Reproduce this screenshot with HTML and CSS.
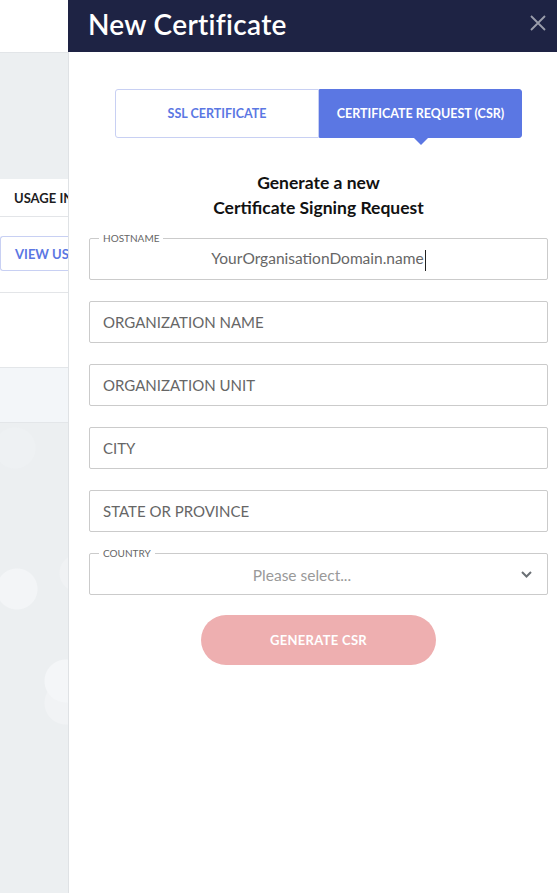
FILE: index.html
```html
<!DOCTYPE html>
<html lang="en">
<head>
    <meta charset="UTF-8">
    <meta name="viewport" content="width=device-width, initial-scale=1.0">
    <title>New Certificate</title>
    <link rel="stylesheet" href="styles.css">
</head>
<body>
    <div class="backdrop">
        <div class="topbar"></div>
        <div class="strip"></div>
        <div class="table-head">USAGE IN</div>
        <div class="table-row">
            <span class="ghost-btn">VIEW USA</span>
        </div>
        <div class="table-blank"></div>
        <div class="table-foot"></div>
        <div class="canvas"></div>
    </div>

    <aside class="panel">
        <header class="panel-header">
            <h1>New Certificate</h1>
            <button class="close" type="button" aria-label="Close">
                <svg width="16" height="16" viewBox="0 0 16 16">
                    <path d="M1 1 L15 15 M15 1 L1 15" stroke="#9a9dab" stroke-width="1.8" fill="none"/>
                </svg>
            </button>
        </header>

        <main class="panel-body">
            <div class="tabs">
                <button type="button" class="tab">SSL CERTIFICATE</button>
                <button type="button" class="tab active">CERTIFICATE REQUEST (CSR)</button>
            </div>

            <h2 class="intro">Generate a new<br>Certificate Signing Request</h2>

            <form class="csr-form">
                <div class="field">
                    <span class="field-label">HOSTNAME</span>
                    <div class="field-value">YourOrganisationDomain.name<span class="caret"></span></div>
                </div>
                <div class="field">
                    <div class="field-placeholder">ORGANIZATION NAME</div>
                </div>
                <div class="field">
                    <div class="field-placeholder">ORGANIZATION UNIT</div>
                </div>
                <div class="field">
                    <div class="field-placeholder">CITY</div>
                </div>
                <div class="field">
                    <div class="field-placeholder">STATE OR PROVINCE</div>
                </div>
                <div class="field">
                    <span class="field-label">COUNTRY</span>
                    <div class="field-select">Please select...</div>
                    <svg class="chevron" width="11" height="7" viewBox="0 0 11 7">
                        <path d="M1 1 L5.5 5.5 L10 1" stroke="#6b7075" stroke-width="2" fill="none"/>
                    </svg>
                </div>

                <button type="button" class="submit">GENERATE CSR</button>
            </form>
        </main>
    </aside>
</body>
</html>
```

FILE: styles.css
```css
body {
    font-family: 'Lato', 'Noto Sans', sans-serif;
    margin: 0;
    padding: 0;
    display: flex;
    height: 893px;
    overflow: hidden;
    background-color: #eceff1;
}

/* page behind the drawer */
.backdrop {
    width: 68px;
    flex-shrink: 0;
    display: flex;
    flex-direction: column;
    overflow: hidden;
    white-space: nowrap;
}

.topbar {
    height: 52px;
    background-color: #fff;
    border-bottom: 1px solid #e2e5e8;
}

.strip {
    height: 126px;
    background-color: #eceff1;
}

.table-head {
    height: 37px;
    line-height: 39px;
    background-color: #fff;
    border-bottom: 1px solid #e3e5e8;
    padding-left: 14px;
    font-size: 13px;
    font-weight: 700;
    color: #1d1d1f;
}

.table-row {
    height: 76px;
    background-color: #fff;
    border-bottom: 1px solid #e3e5e8;
    padding-top: 19px;
    box-sizing: border-box;
}

.ghost-btn {
    display: block;
    height: 35px;
    line-height: 35px;
    box-sizing: border-box;
    border: 1px solid #c8d0f3;
    border-right: none;
    border-radius: 3px 0 0 3px;
    padding-left: 14px;
    font-size: 13px;
    font-weight: 700;
    color: #5b77e3;
}

.table-blank {
    height: 74px;
    background-color: #fff;
    border-bottom: 1px solid #e3e6e9;
}

.table-foot {
    height: 54px;
    background-color: #f3f6f9;
    border-bottom: 1px solid #e3e6e9;
}

.canvas {
    flex: 1;
    background-color: #eceff1;
    background-image:
        radial-gradient(circle at 17px 166px, #f3f5f7 20px, transparent 21px),
        radial-gradient(circle at 66px 258px, #f4f6f8 21px, transparent 22px),
        radial-gradient(circle at 66px 280px, #f1f3f5 21px, transparent 22px),
        radial-gradient(circle at 78px 150px, #f0f2f4 18px, transparent 19px),
        radial-gradient(circle at 15px 25px, #eef1f3 20px, transparent 21px);
}

/* drawer */
.panel {
    flex: 1;
    background-color: #fff;
    border-left: 1px solid #dfe2e5;
    display: flex;
    flex-direction: column;
}

.panel-header {
    height: 52px;
    background-color: #1e2344;
    display: flex;
    align-items: center;
    justify-content: space-between;
    padding: 0 11px 0 20px;
    margin-left: -1px;
}

.panel-header h1 {
    margin: 0 0 4px;
    color: #fff;
    font-size: 28px;
    font-weight: 600;
    letter-spacing: 0.3px;
}

.close {
    background: none;
    border: none;
    padding: 0;
    width: 16px;
    height: 16px;
    margin-bottom: 6px;
    cursor: pointer;
}

.panel-body {
    padding: 37px 9px 0 20px;
    display: flex;
    flex-direction: column;
}

.tabs {
    display: flex;
    justify-content: center;
}

.tab {
    width: 204px;
    height: 49px;
    font-family: inherit;
    font-size: 12.5px;
    font-weight: 700;
    border: 1px solid #c8d0f3;
    background-color: #fff;
    color: #5b77e3;
    border-radius: 3px 0 0 3px;
    cursor: pointer;
}

.tab.active {
    width: 203px;
    position: relative;
    background-color: #5b77e3;
    border-color: #5b77e3;
    color: #fff;
    font-weight: 700;
    border-radius: 0 3px 3px 0;
}

.tab.active::after {
    content: '';
    position: absolute;
    left: 50%;
    bottom: -8px;
    margin-left: -8px;
    border-left: 8px solid transparent;
    border-right: 8px solid transparent;
    border-top: 8px solid #5b77e3;
}

.intro {
    margin: 32px 0 0;
    text-align: center;
    font-size: 17.5px;
    line-height: 25px;
    font-weight: 700;
    color: #111;
}

.csr-form {
    margin-top: 18px;
    display: flex;
    flex-direction: column;
    gap: 21px;
}

.field {
    position: relative;
    height: 42px;
    box-sizing: border-box;
    border: 1px solid #cbcbcb;
    border-radius: 2px;
    display: flex;
    align-items: center;
}

.field-label {
    position: absolute;
    top: -7px;
    left: 9px;
    padding: 0 4px;
    background-color: #fff;
    font-size: 10px;
    line-height: 12px;
    color: #666;
}

.field-value {
    flex: 1;
    text-align: center;
    font-size: 15.5px;
    color: #666;
    margin-top: 2px;
}

.caret {
    display: inline-block;
    width: 1px;
    height: 21px;
    background-color: #222;
    vertical-align: middle;
    margin-left: 1px;
}

.field-placeholder {
    padding-left: 13px;
    font-size: 15px;
    color: #666;
}

.field-select {
    flex: 1;
    text-align: center;
    padding-right: 33px;
    font-size: 15.5px;
    color: #999;
    margin-top: 2px;
}

.chevron {
    position: absolute;
    right: 15px;
    top: 17px;
}

.submit {
    align-self: center;
    width: 235px;
    height: 50px;
    margin-top: -1px;
    border: none;
    border-radius: 25px;
    background-color: #eeafb0;
    color: #fff;
    font-family: inherit;
    font-size: 13px;
    font-weight: 700;
    letter-spacing: 0.3px;
    cursor: pointer;
}
```
